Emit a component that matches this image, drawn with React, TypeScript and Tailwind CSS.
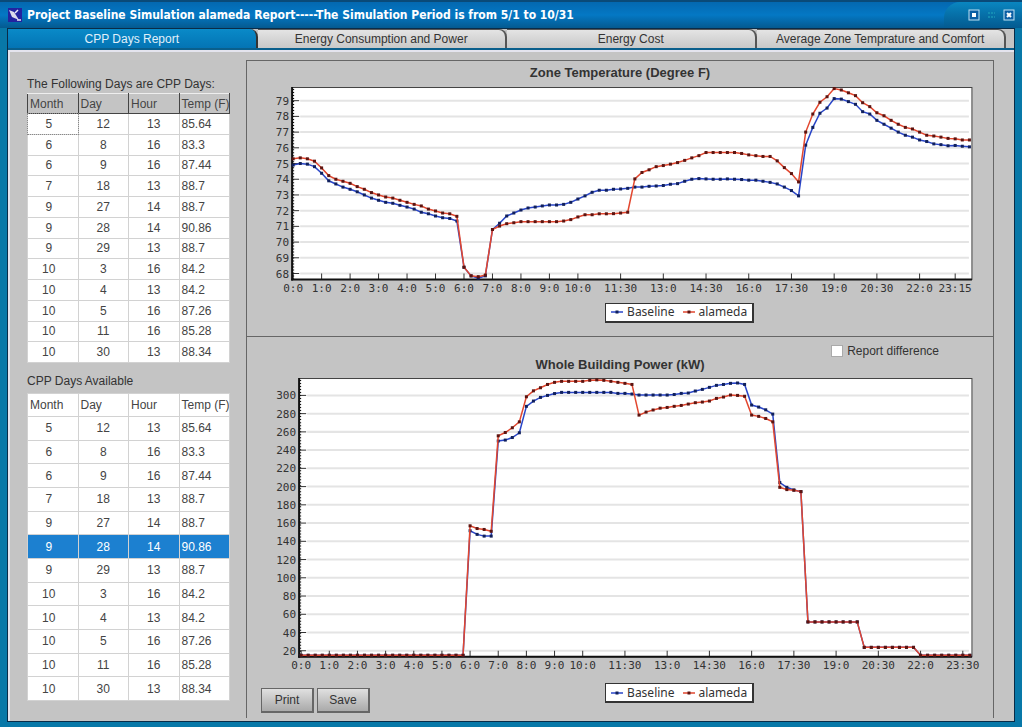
import React, { useState } from 'react';

const TABS = [
  'CPP Days Report',
  'Energy Consumption and Power',
  'Energy Cost',
  'Average Zone Temprature and Comfort',
];

const COLUMNS = ['Month', 'Day', 'Hour', 'Temp (F)'];

const CELL_ALIGN = ['pr-2 text-center', 'text-center', 'text-center', 'pl-[2px] text-left'];

const CPP_DAYS = [
  [5, 12, 13, 85.64],
  [6, 8, 16, 83.3],
  [6, 9, 16, 87.44],
  [7, 18, 13, 88.7],
  [9, 27, 14, 88.7],
  [9, 28, 14, 90.86],
  [9, 29, 13, 88.7],
  [10, 3, 16, 84.2],
  [10, 4, 13, 84.2],
  [10, 5, 16, 87.26],
  [10, 11, 16, 85.28],
  [10, 30, 13, 88.34],
];

// One value per quarter of an hour, 0:00 to 23:45
const TEMP_BASELINE = [
  74.9, 75, 74.96, 74.8, 74.38, 73.9, 73.7, 73.5, 73.36, 73.2, 73, 72.8,
  72.66, 72.53, 72.47, 72.34, 72.23, 72.1, 71.9, 71.8, 71.66, 71.55, 71.5, 71.34,
  68.4, 67.85, 67.7, 67.85, 70.8, 71.2, 71.66, 71.85, 72.04, 72.17, 72.23, 72.3,
  72.36, 72.36, 72.4, 72.53, 72.74, 72.94, 73.17, 73.3, 73.3, 73.36, 73.38, 73.42,
  73.5, 73.5, 73.55, 73.57, 73.6, 73.68, 73.72, 73.87, 74, 74.04, 74.02, 74,
  74, 74.02, 74, 73.98, 73.94, 73.94, 73.87, 73.8, 73.7, 73.5, 73.28, 72.94,
  76.17, 77.3, 78.2, 78.53, 79.13, 79.1, 78.94, 78.77, 78.3, 78.15, 77.75, 77.5,
  77.25, 77, 76.8, 76.68, 76.5, 76.4, 76.25, 76.2, 76.13, 76.15, 76.1, 76.06,
];

const TEMP_ALAMEDA = [
  75.3, 75.36, 75.3, 75.15, 74.72, 74.23, 74, 73.87, 73.74, 73.53, 73.36, 73.15,
  73, 72.87, 72.8, 72.66, 72.53, 72.4, 72.3, 72.1, 71.98, 71.85, 71.8, 71.64,
  68.4, 67.85, 67.8, 67.9, 70.8, 71.02, 71.17, 71.23, 71.3, 71.3, 71.3, 71.3,
  71.3, 71.3, 71.34, 71.43, 71.6, 71.74, 71.74, 71.8, 71.8, 71.81, 71.85, 71.9,
  74.02, 74.43, 74.6, 74.8, 74.87, 74.96, 75.06, 75.2, 75.36, 75.5, 75.7, 75.7,
  75.7, 75.7, 75.7, 75.64, 75.55, 75.5, 75.45, 75.45, 75.17, 74.74, 74.36, 73.83,
  77, 78.15, 78.9, 79.25, 79.77, 79.68, 79.5, 79.32, 78.87, 78.62, 78.23, 78.04,
  77.75, 77.5, 77.3, 77.2, 77, 76.8, 76.75, 76.68, 76.6, 76.57, 76.5, 76.5,
];

const NIGHT_LOAD = Array<number>(24).fill(15);

const EVENING_LOAD = [
  ...Array<number>(8).fill(51.6),
  ...Array<number>(8).fill(23.7),
  ...Array<number>(8).fill(15),
];

const POWER_BASELINE = [
  ...NIGHT_LOAD,
  151.6, 147.6, 145.7, 145.7, 250, 251, 253.8, 259, 288, 293.8, 297.8, 300,
  302, 303.3, 303.3, 303.3, 303.3, 303.3, 303.3, 303.3, 303.3, 302.2, 302.2, 301.5,
  300.4, 300.4, 300.4, 300.4, 300.4, 301, 302.2, 302.6, 304.8, 306.6, 308.8, 311,
  312, 313.2, 313.6, 312, 289.4, 287.2, 284.2, 279.5, 204.4, 199.2, 196.3, 194.5,
  ...EVENING_LOAD,
];

const POWER_ALAMEDA = [
  ...NIGHT_LOAD,
  157, 154, 153, 151, 255.7, 259.3, 264.5, 271, 298.5, 305, 308.4, 312,
  314.3, 315.4, 315.4, 315.4, 315.4, 316.5, 317, 316.5, 315.4, 314.3, 313.2, 312,
  278.4, 281.7, 284, 286, 286.8, 288, 289, 290.5, 292, 292.7, 293.8, 296.7,
  298.2, 300.4, 300, 299, 278.4, 277, 274.7, 271, 199.2, 196.7, 196, 194.5,
  ...EVENING_LOAD,
];

const HOURS = [0, 1, 2, 3, 4, 5, 6, 7, 8, 9, 10, 11.5, 13, 14.5, 16, 17.5, 19, 20.5, 22];

function range(from: number, to: number, step: number) {
  const out: number[] = [];
  for (let v = from; v <= to; v += step) out.push(v);
  return out;
}

function timeLabel(hour: number) {
  return `${Math.floor(hour)}:${(hour % 1) * 60}`;
}

interface SeriesProps {
  values: number[];
  color: string;
  dot: string;
  x: (i: number) => number;
  y: (v: number) => number;
}

function Series({ values, color, dot, x, y }: SeriesProps) {
  return (
    <g>
      <polyline
        points={values.map((v, i) => `${x(i)},${y(v)}`).join(' ')}
        fill="none"
        stroke={color}
        strokeWidth="1.5"
      />
      {values.map((v, i) => (
        <rect key={i} x={x(i) - 1.5} y={y(v) - 1.5} width="3" height="3" fill={dot} />
      ))}
    </g>
  );
}

interface ChartProps {
  label: string;
  height: number;
  left: number;
  firstX: number;
  stepX: number;
  bottom: number;
  ticks: number[];
  firstTickY: number;
  tickGap: number;
  lastHour: number;
  baseline: number[];
  alameda: number[];
}

const RIGHT = 723;

function Chart(props: ChartProps) {
  const { left, bottom, ticks, firstTickY, tickGap, firstX, stepX } = props;
  const unit = tickGap / (ticks[1] - ticks[0]);
  const x = (i: number) => firstX + i * stepX;
  const y = (v: number) => firstTickY - (v - ticks[0]) * unit;
  const hours = [...HOURS, props.lastHour];

  return (
    <svg
      viewBox={`0 0 744 ${props.height}`}
      className="block w-full font-['DejaVu_Sans_Mono',monospace] text-[11px]"
      role="img"
      aria-label={props.label}
    >
      <rect x={left} y="4.5" width={RIGHT - left} height={bottom - 4.5} fill="#fff" stroke="#444" />
      {ticks.map((t) => (
        <g key={t}>
          <line x1={left + 8} x2={RIGHT - 3} y1={y(t)} y2={y(t)} stroke="#e4e4e4" strokeWidth="2" />
          <line x1={left} x2={left + 7} y1={y(t)} y2={y(t)} stroke="#333" />
          <text x={left - 3} y={y(t) + 4} textAnchor="end" fill="#333">
            {t}
          </text>
        </g>
      ))}
      {hours.map((h) => (
        <g key={h}>
          <line x1={x(h * 4)} x2={x(h * 4)} y1={bottom - 6} y2={bottom} stroke="#333" />
          <text x={x(h * 4)} y={bottom + 12} textAnchor="middle" fill="#333">
            {timeLabel(h)}
          </text>
        </g>
      ))}
      <line x1={left} x2={left} y1="4" y2={bottom + 1} stroke="#111" strokeWidth="2" />
      <line x1={left + 1} x2={left + 1} y1="6" y2={bottom} stroke="#111" strokeDasharray="1 2" strokeWidth="2" />
      <line x1={left - 1} x2={RIGHT} y1={bottom} y2={bottom} stroke="#111" strokeWidth="2" />
      <Series values={props.baseline} color="#2a46c8" dot="#10205c" x={x} y={y} />
      <Series values={props.alameda} color="#e2472f" dot="#5c1410" x={x} y={y} />
    </svg>
  );
}

function Legend() {
  return (
    <div className="flex h-5 w-fit items-center gap-2 border border-r-2 border-b-2 border-[#333] bg-white px-[5px] font-['Noto_Sans',sans-serif] text-xs leading-4 text-[#333]">
      <span className="flex items-center gap-1">
        <svg width="12" height="6" viewBox="0 0 12 6" aria-hidden="true">
          <path d="M0 3h12" stroke="#2a46c8" strokeWidth="1.5" />
          <rect x="4.5" y="1.5" width="3" height="3" fill="#10205c" />
        </svg>
        Baseline
      </span>
      <span className="flex items-center gap-1">
        <svg width="12" height="6" viewBox="0 0 12 6" aria-hidden="true">
          <path d="M0 3h12" stroke="#e2472f" strokeWidth="1.5" />
          <rect x="4.5" y="1.5" width="3" height="3" fill="#5c1410" />
        </svg>
        alameda
      </span>
    </div>
  );
}

interface DaysTableProps {
  label: string;
  raised?: boolean;
  selected?: number;
  onSelect?: (row: number) => void;
}

function DaysTable({ label, raised, selected, onSelect }: DaysTableProps) {
  return (
    <table
      aria-label={label}
      className={
        'w-full table-fixed border-collapse border border-[#b0b0b0] bg-white text-[#444] ' +
        (raised ? 'h-[270px]' : 'h-[308px]')
      }
    >
      <thead>
        <tr className={raised ? 'h-5 bg-[#c4c4c4]' : 'h-[23px]'}>
          {COLUMNS.map((c) => (
            <th
              key={c}
              scope="col"
              className={
                raised
                  ? 'overflow-hidden border border-[#444] border-t-[#eee] p-0 pl-[2px] text-left font-normal whitespace-nowrap'
                  : 'overflow-hidden border border-[#d2d2d2] p-0 pl-[2px] text-left font-normal whitespace-nowrap'
              }
            >
              {c}
            </th>
          ))}
        </tr>
      </thead>
      <tbody>
        {CPP_DAYS.map((row, r) => (
          <tr
            key={r}
            onClick={() => onSelect?.(r)}
            className={
              (raised ? 'h-5' : 'h-[23px]') + (r === selected ? ' bg-[#1c80d0] text-white' : '')
            }
          >
            {row.map((v, c) => (
              <td
                key={c}
                className={
                  'border border-[#d2d2d2] p-0 ' +
                  CELL_ALIGN[c] +
                  (raised && r === 0 && c === 0 ? ' outline outline-dotted outline-[#888]' : '')
                }
              >
                {v}
              </td>
            ))}
          </tr>
        ))}
      </tbody>
    </table>
  );
}

export default function App() {
  const [tab, setTab] = useState(0);
  const [selected, setSelected] = useState(5);

  return (
    <div className="flex min-h-screen flex-col border-t-2 border-[#0a4a78] bg-[#0878a8] font-['Liberation_Sans',sans-serif] text-xs text-[#333]">
      <header className="flex h-[26px] items-center gap-1 bg-linear-to-b from-[#0468b0] via-[#0478c4] to-[#045a90] pl-2">
        <svg width="14" height="14" viewBox="0 0 14 14" aria-hidden="true">
          <rect width="14" height="14" fill="#2323a0" />
          <path d="M1 2l5 2 5 8-7-3z" fill="#dcdcec" />
          <path d="M7 5l3-3M9 12h4" stroke="#e8e8f8" strokeWidth="1.5" />
        </svg>
        <h1 className="flex-1 pl-px font-['DejaVu_Sans_Condensed','DejaVu_Sans',sans-serif] text-xs font-bold text-white">
          Project Baseline Simulation alameda Report-----The Simulation Period is from 5/1 to 10/31
        </h1>
        <div className="flex h-full items-center gap-2 rounded-tl-2xl bg-linear-to-b from-[#0a86c0] to-[#045a90] pr-[7px] pl-6">
          <button aria-label="Maximize">
            <svg width="12" height="12" viewBox="0 0 12 12" aria-hidden="true">
              <rect x="1" y="1" width="10" height="10" fill="#0a5ea4" stroke="#bfe2f4" />
              <rect x="4" y="4" width="4" height="4" fill="#fff" />
            </svg>
          </button>
          <svg width="7" height="8" viewBox="0 0 7 8" aria-hidden="true">
            <path d="M0 2h7M0 6h7" stroke="#1a96b8" strokeWidth="1.5" strokeDasharray="2 1" />
          </svg>
          <button aria-label="Close">
            <svg width="12" height="12" viewBox="0 0 12 12" aria-hidden="true">
              <rect x="1" y="1" width="10" height="10" fill="#0a5ea4" stroke="#bfe2f4" />
              <path d="M4 4l4 4M8 4l-4 4" stroke="#fff" strokeWidth="2" />
            </svg>
          </button>
        </div>
      </header>

      <div className="mx-[7px] mb-[5px] flex flex-1 flex-col border border-[#0a2c48] bg-[#c4c4c4]">
        <nav role="tablist" className="flex h-[21px] border-b-2 border-[#0a5f8c] pr-2">
          {TABS.map((t, i) => (
            <button
              key={t}
              role="tab"
              aria-selected={tab === i}
              onClick={() => setTab(i)}
              className={
                tab === i
                  ? 'flex-1 rounded-tr-lg border-r-2 border-[#333] bg-linear-to-b from-[#0a8ac8] to-[#0474b4] text-[#e0f0fa]'
                  : 'flex-1 rounded-tr-lg border-t border-r-2 border-[#555] bg-linear-to-b from-[#e4e4e4] to-[#c8c8c8]'
              }
            >
              {t}
            </button>
          ))}
        </nav>

        <main className="flex flex-1 border-t-2 border-l-2 border-[#e4e4ee] pt-2 pr-5 pb-[3px] pl-[17px]">
          <aside className="w-[203px] shrink-0">
            <h2 className="pt-4 pb-px leading-4">The Following Days are CPP Days:</h2>
            <DaysTable label="CPP days" raised />
            <h2 className="pt-[10px] pb-1 leading-4">CPP Days Available</h2>
            <DaysTable label="CPP days available" selected={selected} onSelect={setSelected} />
          </aside>

          <div className="ml-4 flex flex-1 flex-col border border-b-0 border-[#666]">
            <section className="border-b border-[#666] pb-[13px]">
              <h2 className="pt-1 pb-[2px] text-center text-[13px] leading-4 font-bold">
                Zone Temperature (Degree F)
              </h2>
              <Chart
                label="Zone temperature in degrees Fahrenheit"
                height={219}
                left={45}
                firstX={46}
                stepX={7.1}
                bottom={196}
                ticks={range(68, 79, 1)}
                firstTickY={190}
                tickGap={15.67}
                lastHour={23.25}
                baseline={TEMP_BASELINE}
                alameda={TEMP_ALAMEDA}
              />
              <div className="pl-[48%]">
                <Legend />
              </div>
            </section>

            <section className="flex flex-1 flex-col pt-2">
              <label className="flex h-3 items-center gap-1 self-end pr-[54px]">
                <input
                  type="checkbox"
                  className="size-3 appearance-none border border-[#aaa] bg-white checked:bg-[#1c80d0]"
                />
                Report difference
              </label>
              <h2 className="pb-px text-center text-[13px] leading-4 font-bold">
                Whole Building Power (kW)
              </h2>
              <Chart
                label="Whole building power in kilowatts"
                height={309}
                left={52}
                firstX={54}
                stepX={7.02}
                bottom={282}
                ticks={range(20, 300, 20)}
                firstTickY={276}
                tickGap={18.19}
                lastHour={23.5}
                baseline={POWER_BASELINE}
                alameda={POWER_ALAMEDA}
              />
              <div className="flex">
                <div className="flex w-[48%] gap-[3px] pt-[5px] pl-[14px]">
                  <button className="h-[25px] w-[53px] border border-r-2 border-b-2 border-[#666] bg-linear-to-b from-[#e0e0e0] to-[#aaa]">
                    Print
                  </button>
                  <button className="h-[25px] w-[53px] border border-r-2 border-b-2 border-[#666] bg-linear-to-b from-[#e0e0e0] to-[#aaa]">
                    Save
                  </button>
                </div>
                <Legend />
              </div>
            </section>
          </div>
        </main>
      </div>
    </div>
  );
}
